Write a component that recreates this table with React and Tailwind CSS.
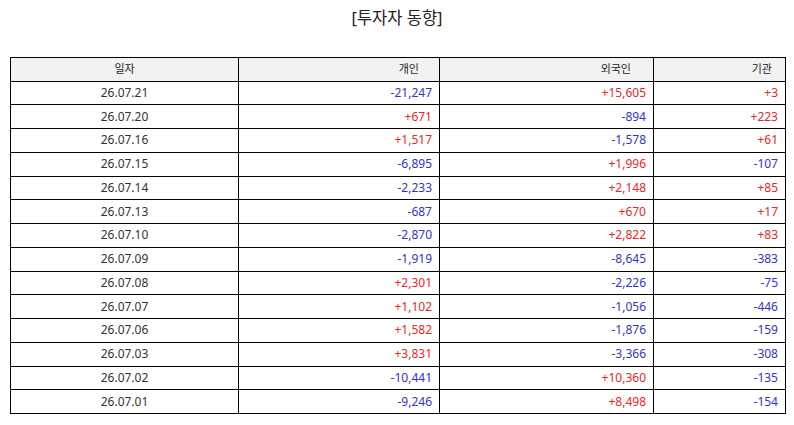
const rows = [
  ["26.07.21", "-21,247", "+15,605", "+3"],
  ["26.07.20", "+671", "-894", "+223"],
  ["26.07.16", "+1,517", "-1,578", "+61"],
  ["26.07.15", "-6,895", "+1,996", "-107"],
  ["26.07.14", "-2,233", "+2,148", "+85"],
  ["26.07.13", "-687", "+670", "+17"],
  ["26.07.10", "-2,870", "+2,822", "+83"],
  ["26.07.09", "-1,919", "-8,645", "-383"],
  ["26.07.08", "+2,301", "-2,226", "-75"],
  ["26.07.07", "+1,102", "-1,056", "-446"],
  ["26.07.06", "+1,582", "-1,876", "-159"],
  ["26.07.03", "+3,831", "-3,366", "-308"],
  ["26.07.02", "-10,441", "+10,360", "-135"],
  ["26.07.01", "-9,246", "+8,498", "-154"],
];

const Num = ({ value }) => (
  <td
    className={`border border-black text-right pr-[7px] ${
      value.startsWith("-") ? "text-[#3434c4]" : "text-[#e02a2a]"
    }`}
  >
    {value}
  </td>
);

const App = () => {
  return (
    <div className="w-[794px] h-[425px] bg-white font-['Noto_Sans','Noto_Sans_CJK_KR',sans-serif] text-[#333]">
      <div className="h-[57px] pt-[5px] text-center text-[16.5px] leading-[26px] text-[#222]">
        [투자자 동향]
      </div>
      <table className="ml-[10px] w-[775px] table-fixed border-collapse text-[12px]">
        <colgroup>
          <col className="w-[228px]" />
          <col className="w-[201px]" />
          <col className="w-[214px]" />
          <col className="w-[132px]" />
        </colgroup>
        <thead>
          <tr className="h-[23.5px] bg-[#f2f2f2] text-[11px] text-[#222]">
            <th className="border border-black font-normal text-center">일자</th>
            <th className="border border-black font-normal text-right pr-[20px]">개인</th>
            <th className="border border-black font-normal text-right pr-[22px]">외국인</th>
            <th className="border border-black font-normal text-right pr-[13px]">기관</th>
          </tr>
        </thead>
        <tbody>
          {rows.map((r) => (
            <tr key={r[0]} className="h-[23.75px]">
              <td className="border border-black text-center">{r[0]}</td>
              <Num value={r[1]} />
              <Num value={r[2]} />
              <Num value={r[3]} />
            </tr>
          ))}
        </tbody>
      </table>
    </div>
  );
};

export default App;
